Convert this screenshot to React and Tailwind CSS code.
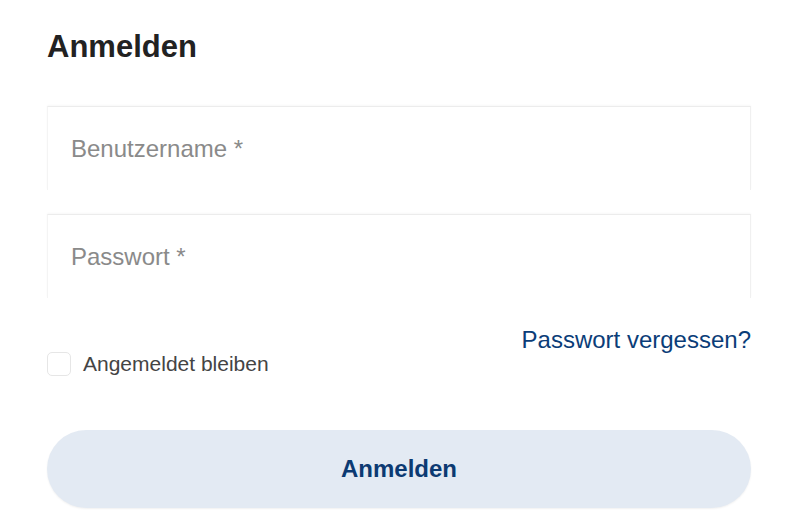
import React from 'react'

export default function App() {
  return (
    <div className="min-h-screen bg-white font-['Liberation_Sans',Arial,sans-serif]">
      <main className="pl-[47px] pr-[45px] pt-[29px]">
        <h1 className="text-[31px] leading-[36px] font-bold text-[#222]">Anmelden</h1>

        <form className="mt-[41px] flex flex-col" onSubmit={(e) => e.preventDefault()}>
          <input
            type="text"
            placeholder="Benutzername *"
            className="h-[84px] w-full border-t border-l border-r border-t-[#ececec] border-l-[#f4f4f4] border-r-[#f0f0f0] bg-white px-[23px] text-[24px] text-[#333] shadow-[0_-1px_2px_rgba(0,0,0,0.03)] outline-none placeholder:text-[#8a8a8a]"
          />
          <input
            type="password"
            placeholder="Passwort *"
            className="mt-6 h-[84px] w-full border-t border-l border-r border-t-[#ececec] border-l-[#f4f4f4] border-r-[#f0f0f0] bg-white px-[23px] text-[24px] text-[#333] shadow-[0_-1px_2px_rgba(0,0,0,0.03)] outline-none placeholder:text-[#8a8a8a]"
          />

          <div className="mt-7 flex justify-end">
            <a href="#" className="text-[24px] leading-[28px] text-[#0b3d78]">Passwort vergessen?</a>
          </div>

          <label className="-mt-0.5 flex items-center gap-3">
            <span className="h-6 w-6 rounded-[5px] border border-[#e6e6e6] bg-white" />
            <span className="text-[21px] leading-6 text-[#444]">Angemeldet bleiben</span>
          </label>

          <button
            type="submit"
            className="mt-[54px] h-[78px] w-full rounded-full bg-[#e3eaf3] text-[24px] font-bold text-[#0c3a72] shadow-[0_1px_2px_rgba(0,0,0,0.06)]"
          >
            Anmelden
          </button>
        </form>
      </main>
    </div>
  )
}
